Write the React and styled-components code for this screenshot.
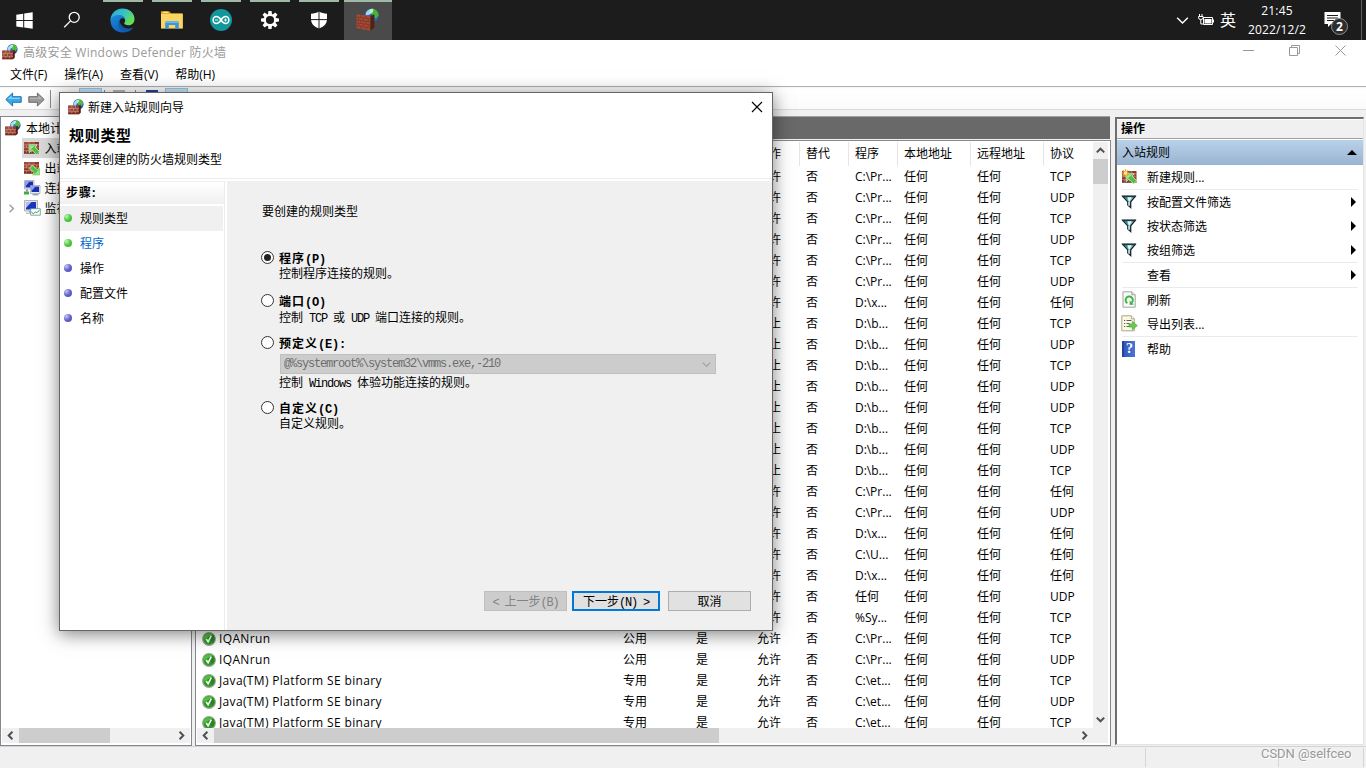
import React from 'react';
import styled, { createGlobalStyle, css } from 'styled-components';

const rows = [
  ['', '', '', '允许', '否', 'C:\\Pr...', 'TCP'],
  ['', '', '', '允许', '否', 'C:\\Pr...', 'UDP'],
  ['', '', '', '允许', '否', 'C:\\Pr...', 'TCP'],
  ['', '', '', '允许', '否', 'C:\\Pr...', 'UDP'],
  ['', '', '', '允许', '否', 'C:\\Pr...', 'TCP'],
  ['', '', '', '允许', '否', 'C:\\Pr...', 'UDP'],
  ['', '', '', '允许', '否', 'D:\\x...', '任何'],
  ['', '', '', '阻止', '否', 'D:\\b...', 'TCP'],
  ['', '', '', '阻止', '否', 'D:\\b...', 'UDP'],
  ['', '', '', '阻止', '否', 'D:\\b...', 'TCP'],
  ['', '', '', '阻止', '否', 'D:\\b...', 'UDP'],
  ['', '', '', '阻止', '否', 'D:\\b...', 'UDP'],
  ['', '', '', '阻止', '否', 'D:\\b...', 'TCP'],
  ['', '', '', '阻止', '否', 'D:\\b...', 'UDP'],
  ['', '', '', '阻止', '否', 'D:\\b...', 'TCP'],
  ['', '', '', '允许', '否', 'C:\\Pr...', '任何'],
  ['', '', '', '允许', '否', 'C:\\Pr...', 'UDP'],
  ['', '', '', '允许', '否', 'D:\\x...', '任何'],
  ['', '', '', '允许', '否', 'C:\\U...', '任何'],
  ['', '', '', '允许', '否', 'D:\\x...', '任何'],
  ['', '', '', '允许', '否', '任何', 'UDP'],
  ['', '', '', '允许', '否', '%Sy...', 'TCP'],
  ['IQANrun', '公用', '是', '允许', '否', 'C:\\Pr...', 'TCP'],
  ['IQANrun', '公用', '是', '允许', '否', 'C:\\Pr...', 'UDP'],
  ['Java(TM) Platform SE binary', '专用', '是', '允许', '否', 'C:\\et...', 'TCP'],
  ['Java(TM) Platform SE binary', '专用', '是', '允许', '否', 'C:\\et...', 'UDP'],
  ['Java(TM) Platform SE binary', '专用', '是', '允许', '否', 'C:\\et...', 'TCP'],
];

const steps = [
  { label: '规则类型', done: true, current: true },
  { label: '程序', done: true, link: true },
  { label: '操作' },
  { label: '配置文件' },
  { label: '名称' },
];

/* ---------- icons ---------- */

const Bricks = ({ x = 0, y = 0, w, h, count = 4 }) => {
  const rowH = h / count;
  return (
    <g>
      <rect x={x} y={y} width={w} height={h} fill="#913a29" />
      <rect x={x} y={y} width={w * 0.6} height={h / 2} fill="#a04c39" />
      {Array.from({ length: count }, (_, r) => (
        <g key={r} stroke="#cfa093" strokeWidth=".6">
          {r > 0 && <line x1={x} x2={x + w} y1={y + r * rowH} y2={y + r * rowH} />}
          {[0, 1, 2].map((c) => {
            const bx = x + ((c + (r % 2 ? 0.5 : 1)) * w) / 3;
            return bx < x + w - 1 ? (
              <line key={c} x1={bx} x2={bx} y1={y + r * rowH} y2={y + (r + 1) * rowH} />
            ) : null;
          })}
        </g>
      ))}
      <rect x={x} y={y + h - 0.8} width={w} height=".8" fill="#5c2118" />
    </g>
  );
};

const FirewallIcon = ({ size = 16 }) => (
  <svg width={size} height={size} viewBox="0 0 16 16">
    <circle cx="10.4" cy="5.3" r="5.2" fill="#2569c8" />
    <path d="M6 3.400C7.400 1.200 9.800.2 11.600.5l-.6 2.700-2.400 1.600-.6 2.400-2.500.2z" fill="#a9dcf4" />
    <path d="M10.800.600c2.400.2 4 1.800 4.300 4l-1.500 2.600-2.600-.6-1.200-2.300z" fill="#55bd3d" />
    <path d="M9 1.600l2.200-.8-.4 2.300-2 .9z" fill="#c0f0a5" />
    <path d="M12 8.200l2.600-1.600-.8 2.200-1.800 1.200z" fill="#163f99" />
    <Bricks x={0.2} y={6.6} w={10.8} h={8.6} count={3} />
    <path d="M11 6.600l1.800-1v8.200L11 15.200z" fill="#5a2018" />
  </svg>
);

const TaskFirewallIcon = () => (
  <svg width="24" height="24" viewBox="0 0 24 24">
    <circle cx="15.8" cy="7.4" r="6.9" fill="#2667c4" />
    <path d="M10 4.5C12 1.5 15 .3 17.6 1l-.8 4-5 2.2-2.2.6z" fill="#9ed8f2" />
    <path d="M16.500.8c3.600.6 6 3.200 6.200 6.400l-2.800 3.200-3.200-2-.8-3z" fill="#48b336" />
    <path d="M14 1.600l3.400-.6-.5 3.200-3 1.200z" fill="#c6f2b0" />
    <path d="M.6 6.2l13.8 1.600V22.800L.6 20.200z" fill="#a34b37" />
    <path d="M14.400 7.800l4-1.200v13l-4 3.200z" fill="#54200f" />
    <path
      d="M.6 9l13.800 1.800M.6 12l13.800 1.900M.6 14.800l13.800 2.100M.6 17.600l13.800 2.300M5 6.800v2.800m5-2.200v2.800M2.600 9.500v2.800M7.400 10v2.800m4.800-2v2.800M5 12.600v2.800m5-2.200V16m-7.400-.8V18m4.800-2.200v2.800m4.800-2v2.800M5 18.400V21m5-1.800v2.700"
      fill="none"
      stroke="#7c3323"
      strokeWidth=".7"
    />
  </svg>
);

const RuleIcon = ({ out, star }) => (
  <svg width="16" height="16" viewBox="0 0 16 16">
    <Bricks x={star ? 1 : 0} y={2} w={star ? 14.5 : 15} h={11.5} count={4} />
    <g transform={out ? 'rotate(180 10.6 10)' : undefined}>
      <path
        d="M5.200 4.800h8l-2.300 2.300 4.800 4.600-3 3.200-4.800-4.700-2.700 2.500z"
        fill="#4fc13f"
        stroke="#d9f2d2"
        strokeWidth=".8"
      />
      <path d="M6 5.600h5L6 10.600z" fill="#9be58d" />
    </g>
    {star && (
      <g>
        <path
          d="M4.500 0v8M.5 4h8M1.700 1.200l5.600 5.600M7.300 1.200L1.700 6.800"
          stroke="#f6a821"
          strokeWidth="1.100"
        />
        <circle cx="4.500" cy="4" r="1.700" fill="#fff3a8" />
      </g>
    )}
  </svg>
);

const ConnectionIcon = () => (
  <svg width="17" height="16" viewBox="0 0 17 16">
    <path d="M.5.500h9.500v8.500H.5z" fill="#e4e7ef" stroke="#8c92a6" strokeWidth=".6" />
    <path d="M1.500 1.500h7.500v6H1.500z" fill="#1b2fb5" />
    <path d="M1.500 1.500h4L1.500 6.500z" fill="#8fa8f0" />
    <path d="M0 11.500h5v3H0z" fill="#3fae3a" />
    <path d="M2 9.500h2v2H2z" fill="#8a93a8" />
    <path d="M6.500 5.500h9.500v8H6.500z" fill="#e9ecf4" stroke="#8c92a6" strokeWidth=".6" />
    <path d="M7.500 6.500h7.500v5.500H7.500z" fill="#1b2fb5" />
    <path d="M7.500 6.500h4l-4 4.500z" fill="#8fa8f0" />
    <path d="M8.500 14h6v1.400h-6z" fill="#9aa1b4" />
  </svg>
);

const MonitorIcon = () => (
  <svg width="17" height="16" viewBox="0 0 17 16">
    <path d="M.5.5h13v10.500H.5z" fill="#e2e4ea" stroke="#999" strokeWidth=".7" />
    <path d="M2 2h10v7.500H2z" fill="#1c35bd" />
    <path d="M2 2h5.500L2 8z" fill="#a8bdf0" />
    <path d="M5 11h4v1.500H5z" fill="#9ba0aa" />
    <path d="M2 12.500h7v1.400H2z" fill="#b9bdc7" />
    <path d="M6.700 8.700h9.600v6.500H6.700z" fill="#fff" stroke="#5d91a8" strokeWidth=".8" />
    <path d="M7.400 12l2 1.800 2-2 1.400 1 2.600-2.600" stroke="#2e9c33" fill="none" strokeWidth="1" />
  </svg>
);

const FunnelIcon = () => (
  <svg width="16" height="14" viewBox="0 0 16 14">
    <path d="M1.800 1.500h12.400L9.700 6.800v5.700L6.800 10V6.800z" fill="#8fcdd6" stroke="#15282d" strokeWidth="1.300" />
    <path d="M3.800 2.200h2.700v4z" fill="#2d8794" />
    <path d="M6.500 2.200h4L8.300 6.800z" fill="#f0f6f7" />
    <path d="M1 1.300h14" stroke="#24363a" strokeWidth="1.500" />
    <path d="M7.900 6.800v4" stroke="#e6eef0" />
  </svg>
);

const RefreshIcon = () => (
  <svg width="16" height="17" viewBox="0 0 16 17">
    <path d="M2 .8h8.800l3.400 3v12.400H2z" fill="#fafafa" stroke="#a3a3a3" />
    <path d="M10.800.8v3h3.400" fill="#e5e5e5" stroke="#a3a3a3" />
    <path d="M6.400 12.200A3.600 3.600 0 1 1 10.800 11.600" fill="none" stroke="#3db544" strokeWidth="2" />
    <path d="M8.600 9.600v4.400l4.400-.6z" fill="#3db544" />
  </svg>
);

const ExportIcon = () => (
  <svg width="17" height="17" viewBox="0 0 17 17">
    <path d="M.8.8h9.500l3 3v12H.8z" fill="#fbf8e4" stroke="#aaa58b" />
    <path d="M10.300.8v3h3" fill="#fff" stroke="#aaa58b" />
    <path d="M3 5.500h1.200M3 8.500h1.200M3 11.500h1.200M5.500 5.500h5M5.500 8.500h3M5.500 11.500h3" stroke="#5b5b66" />
    <path d="M8 9h3.400V6.400l4.900 4.200-4.900 4.200V12H8z" fill="#67ce49" stroke="#3a9d2b" strokeWidth=".6" />
  </svg>
);

const HelpIcon = () => (
  <HelpBook>
    <span>?</span>
  </HelpBook>
);

const CheckIcon = () => (
  <svg width="14" height="14" viewBox="0 0 14 14">
    <circle cx="7" cy="7" r="6.300" fill="#2c9a22" stroke="#9aa59a" strokeWidth="1.200" />
    <path d="M7 1.200A5.800 5.800 0 0 1 11 11L3 3a5.800 5.800 0 0 1 4-1.800z" fill="#27871c" />
    <path d="M1.600 6A5.600 5.600 0 0 1 10.500 2.400C8 4 4 6 1.600 8z" fill="#4cc23d" />
    <path d="M4.200 7l1.900 2.800L9.300 3.600" fill="none" stroke="#fff" strokeWidth="1.600" />
  </svg>
);

const ArrowIcon = ({ forward }) => (
  <svg width="17" height="15" viewBox="0 0 17 15">
    <g transform={forward ? 'translate(17 0) scale(-1 1)' : undefined}>
      <path
        d="M.8 7.500L7.600 1v3.700h8.600v5.600H7.600V14z"
        fill={forward ? '#9a9a9a' : '#3ba9e8'}
        stroke={forward ? '#6c6c6c' : '#1e73b5'}
        strokeWidth="1"
      />
      <path d="M2.800 7L6.600 3.400v2.400h8.400V7z" fill={forward ? '#b5b5b5' : '#83d2fa'} />
    </g>
  </svg>
);

const Chevron = ({ dir, color = '#505050', size = 9, weight = 2 }) => {
  const turn = { up: 0, right: 90, down: 180, left: 270 }[dir];
  return (
    <svg width={size} height={size} viewBox="0 0 9 9">
      <path
        d="M.8 6.400l3.700-3.700 3.700 3.700"
        fill="none"
        stroke={color}
        strokeWidth={weight}
        transform={`rotate(${turn} 4.5 4.5)`}
      />
    </svg>
  );
};

const WindowsIcon = () => (
  <svg width="17" height="17" viewBox="0 0 17 17" fill="#fff">
    <path d="M.3 2.700l6.900-1v6.400H.3zM8.200 1.500L16.700.3v7.800H8.200zM.3 9h6.900v6.400l-6.900-1zM8.200 9h8.500v7.800l-8.500-1.200z" />
  </svg>
);

const SearchIcon = () => (
  <svg width="18" height="18" viewBox="0 0 18 18" fill="none" stroke="#fff" strokeWidth="1.300">
    <circle cx="11.200" cy="6.300" r="5" />
    <path d="M7.600 9.900L1.200 16.300" />
  </svg>
);

const EdgeIcon = () => (
  <svg width="25" height="25" viewBox="0 0 25 25">
    <defs>
      <linearGradient id="edgeTop" x1="0" x2="1" y1="0" y2=".6">
        <stop offset="0" stopColor="#2aa5df" />
        <stop offset=".5" stopColor="#35c1c9" />
        <stop offset="1" stopColor="#66e04e" />
      </linearGradient>
      <linearGradient id="edgeLow" x1="0" x2=".7" y1="0" y2="1">
        <stop offset="0" stopColor="#1c8edb" />
        <stop offset="1" stopColor="#0c59b6" />
      </linearGradient>
    </defs>
    <path
      d="M.5 12.400C.5 5.700 5.600.5 12.400.5c7 0 12.100 4.600 12.100 10.400 0 4-2.800 6.300-6.200 6.300-2.600 0-4.100-.9-4.100-1.900 0-.7 1-1.200 1-3 0-2.500-2.200-4.400-5-4.400C5.600 7.900 2 10.200.5 12.400z"
      fill="url(#edgeTop)"
    />
    <path
      d="M.5 12.400C1 8.600 5 6.900 9 6.900c3.600 0 6.200 2 6.200 5-1-2-2.500-2.500-4-1.500-3.500 2.300-2.400 9.300 2.900 11.200 3 1 6.200.4 8.900-1.400-2.200 2.800-6 4.400-10.400 4.300C5.500 24.300.5 19 .5 12.400z"
      fill="url(#edgeLow)"
    />
    <path
      d="M9.200 12.500c-2.400 5.100 1 11 7.600 10.900 3-.6 5.300-2.200 6.500-4.200-5.600 3-12.300.7-14.100-6.700z"
      fill="#1258a4"
    />
  </svg>
);

const FolderIcon = () => (
  <svg width="24" height="20" viewBox="0 0 24 20">
    <path d="M1 1.200h8l2 2H22.500v15H1z" fill="#e9a722" />
    <path d="M1 4h21.800v14.500H1z" fill="#fcd462" />
    <path d="M3 1.800h5v1.200H3z" fill="#fbe6a3" />
    <path d="M5.200 19v-6q0-1.800 1.800-1.800h10q1.800 0 1.800 1.800v6h-3.600v-4H8.800v4z" fill="#3a96dd" />
    <path d="M5.200 13v-.4q0-1.400 1.800-1.400h10q1.800 0 1.800 1.400v.4z" fill="#69b8ee" />
  </svg>
);

const ArduinoIcon = () => (
  <svg width="24" height="24" viewBox="0 0 24 24">
    <circle cx="12" cy="12" r="11" fill="#12979c" />
    <path
      d="M12 12C10.500 9.700 9.300 8.600 7.500 8.600a3.400 3.400 0 0 0 0 6.800c1.800 0 3-1.100 4.500-3.400s2.700-3.400 4.500-3.400a3.400 3.400 0 0 1 0 6.800c-1.800 0-3-1.100-4.500-3.400z"
      fill="none"
      stroke="#fff"
      strokeWidth="1.500"
    />
    <path d="M6 12h3M15 12h3M16.500 10.500v3" stroke="#fff" strokeWidth=".9" />
  </svg>
);

const GearIcon = () => (
  <svg width="20" height="20" viewBox="0 0 20 20">
    {[0, 45, 90, 135, 180, 225, 270, 315].map((a) => (
      <path key={a} d="M8.400 1h3.200l.4 3.500H8z" fill="#fff" transform={`rotate(${a} 10 10)`} />
    ))}
    <circle cx="10" cy="10" r="5.200" fill="none" stroke="#fff" strokeWidth="2.200" />
  </svg>
);

const ShieldIcon = () => (
  <svg width="18" height="18" viewBox="0 0 18 18">
    <path
      d="M9 .5c2.300 1.500 5 2.100 8 2.200v5.600c0 4.400-3.200 7.500-8 9.300C4.200 15.800 1 12.700 1 8.300V2.700C4 2.600 6.700 2 9 .5z"
      fill="#fff"
    />
    <path d="M9 0v18M0 8.600h18" stroke="#1c1c1c" strokeWidth="1" />
  </svg>
);

const BatteryIcon = () => (
  <svg width="17" height="14" viewBox="0 0 17 14" fill="none" stroke="#fff">
    <path d="M5.500 4.500H14.500v7h-9z" />
    <path d="M6.500 6h7v4.500h-7z" fill="#fff" stroke="none" />
    <path d="M15.500 6.500v3" />
    <path d="M1.500 1v2M4 1v2M.5 3.500h4.600v1.300q0 1.700-2.300 1.700T.5 4.800zM2.800 6.500v4.500h2.500" />
  </svg>
);

/* ---------- styles ---------- */

const GlobalStyle = createGlobalStyle`
  * {
    box-sizing: border-box;
  }

  body {
    margin: 0;
    overflow: hidden;
    background: #f0f0f0;
    font-family: 'Open Sans', 'Noto Sans CJK SC', sans-serif;
    font-size: 12px;
    color: #000;
  }

  svg {
    display: block;
    flex: none;
  }
`;

const Screen = styled.div`
  position: relative;
  display: flex;
  flex-direction: column;
  width: 1366px;
  height: 768px;
  overflow: hidden;
`;

const Taskbar = styled.div`
  display: flex;
  flex: none;
  height: 40px;
  background: #1c1c1c;
  color: #fff;
`;

const TaskButton = styled.div`
  display: flex;
  align-items: center;
  justify-content: center;
  width: ${({ $active, $start }) => ($active || $start ? 48 : 49)}px;
  margin-left: ${({ $active }) => ($active ? 1 : 0)}px;
  background: ${({ $active }) => ($active ? '#4a4a4a' : 'transparent')};
  ${({ $open, $active }) =>
    $open &&
    css`
      background-image: linear-gradient(#9fb9a5, #9fb9a5);
      background-size: ${$active ? 48 : 40}px 2px;
      background-position: center top;
      background-repeat: no-repeat;
    `}
`;

const Gap = styled.div`
  width: 1px;
`;

const Tray = styled.div`
  display: flex;
  align-items: center;
  margin-left: auto;
`;

const TrayBattery = styled.div`
  margin-left: 9px;
`;

const InputMode = styled.span`
  width: 17px;
  margin-left: 5px;
  font-size: 16px;
  line-height: 38px;
`;

const Clock = styled.div`
  width: 62px;
  margin-left: 9px;
  text-align: center;
  line-height: 19px;
  letter-spacing: .15px;
`;

const Notify = styled.div`
  position: relative;
  width: 17px;
  height: 18px;
  margin: 0 20px 0 16px;
`;

const Badge = styled.span`
  position: absolute;
  left: 7px;
  top: 7px;
  width: 17px;
  height: 17px;
  border: 1px solid #8d8d8d;
  border-radius: 50%;
  background: #2e2e2e;
  font-size: 12px;
  font-weight: 700;
  line-height: 15px;
  text-align: center;
`;

const DesktopEdge = styled.div`
  width: 5px;
  height: 40px;
  border-left: 1px solid #5e5e5e;
`;

const TitleBar = styled.div`
  display: flex;
  align-items: center;
  flex: none;
  height: 23px;
  padding: 0 20px 0 2px;
  background: #fff;
  color: #999;
`;

const TitleText = styled.span`
  margin-left: 5px;
  letter-spacing: .25px;
`;

const WindowControls = styled.div`
  display: flex;
  gap: 35px;
  margin: -2px 0 0 auto;
`;

const MenuBar = styled.div`
  display: flex;
  gap: 17px;
  flex: none;
  height: 23px;
  padding-left: 10px;
  background: #fff;
  line-height: 23px;
`;

const Toolbar = styled.div`
  display: flex;
  flex: none;
  height: 24px;
  padding: 2px 0 0 5px;
  border-top: 1px solid #b0b0b0;
  border-bottom: 1px solid #dadada;
  background: linear-gradient(#f4f4f4, #fff 2px, #fbfbfb);
`;

const ToolArrow = styled.div`
  margin: 3px 6px 0 0;
`;

const ToolDivider = styled.div`
  width: 1px;
  height: 18px;
  margin: 1px 0 0 ${({ $gap }) => $gap}px;
  background: #8c8c8c;
`;

const ToolToggle = styled.div`
  width: 23px;
  height: 20px;
  margin: -1px 0 0 ${({ $gap }) => $gap}px;
  border: 1px solid #8ec8ee;
  background: #c9e4f7;
`;

const ToolGlyph = styled.div`
  width: 12px;
  height: 14px;
  margin: ${({ $top }) => $top}px 0 0 ${({ $gap }) => $gap}px;
  background: ${({ $color }) => $color};
`;

const Workspace = styled.div`
  display: flex;
  flex: 1;
  min-height: 0;
  padding: 6px 1px 0 0;
  background: #f0f0f0;
`;

const TreePane = styled.div`
  display: flex;
  flex-direction: column;
  width: 192px;
  border: 1px solid #828790;
  background: #fff;
`;

const Tree = styled.div`
  flex: 1;
  padding: 1px 0 0 1px;
`;

const TreeRow = styled.div`
  display: flex;
  align-items: center;
  height: 20px;
  padding-left: ${({ $root }) => ($root ? 3 : 5)}px;
  white-space: nowrap;
`;

const Twisty = styled.div`
  width: 15px;
`;

const TreeLabel = styled.div`
  display: flex;
  align-items: center;
  flex: 1;
  height: 20px;
  padding-left: ${({ $root }) => ($root ? 0 : 2)}px;
  background: ${({ $selected }) => ($selected ? '#d9d9d9' : 'transparent')};
`;

const TreeIcon = styled.div`
  width: ${({ $root }) => ($root ? 21 : 20.5)}px;
`;

const ListPane = styled.div`
  display: flex;
  flex-direction: column;
  width: 916px;
  margin-left: 3px;
`;

const ListBanner = styled.div`
  flex: none;
  height: 23px;
  margin-right: 1px;
  border-top: 1px solid #a0a0a0;
  background: #696969;
`;

const ListFrame = styled.div`
  display: flex;
  flex-direction: column;
  flex: 1;
  min-height: 0;
  margin-top: 1px;
  padding: 1px;
  border: 1px solid #828790;
  background: #fff;
`;

const ListView = styled.div`
  display: flex;
  flex: 1;
  min-height: 0;
`;

const Table = styled.div`
  flex: 1;
  min-height: 0;
  overflow: hidden;
`;

const TableRow = styled.div`
  display: grid;
  grid-template-columns: 419px 73px 61px 49px 49px 49px 73px 73px 50px;
  height: ${({ $head }) => ($head ? 24 : 21)}px;
  line-height: ${({ $head }) => ($head ? 24 : 21)}px;
  white-space: nowrap;
`;

const Cell = styled.div`
  display: flex;
  align-items: center;
  gap: 3px;
  padding-left: ${({ $name }) => ($name ? 5 : 7)}px;
  letter-spacing: ${({ $name }) => ($name ? '.35px' : '0')};
`;

const HeadCell = styled.div`
  padding-left: 6px;
  border-left: 1px solid #e5e5e5;
`;

const VScroll = styled.div`
  display: flex;
  flex-direction: column;
  align-items: center;
  width: 15px;
  margin-right: 1px;
  background: #f0f0f0;
`;

const HScroll = styled.div`
  display: flex;
  align-items: center;
  flex: none;
  height: 15px;
  margin: 0 1px ${({ $tree }) => ($tree ? 2 : 1)}px ${({ $tree }) => ($tree ? 1 : 0)}px;
  padding-right: ${({ $tree }) => ($tree ? 0 : 15)}px;
  background: #f0f0f0;
`;

const ScrollArrow = styled.div`
  display: flex;
  align-items: center;
  justify-content: center;
  width: 17px;
  height: 17px;
`;

const Thumb = styled.div`
  width: ${({ $w }) => $w}px;
  height: ${({ $h }) => $h}px;
  background: #cdcdcd;
`;

const Spacer = styled.div`
  flex: 1;
`;

const ActionPane = styled.div`
  flex: 1;
  margin: 1px 1px 1px 4px;
  border: 1px solid #e3e3e3;
  border-top: 2px solid #6e6e6e;
  border-left: 2px solid #6e6e6e;
  background: #fff;
`;

const ActionTitle = styled.div`
  height: 20px;
  padding-left: 4px;
  border-top: 1px solid #fff;
  border-bottom: 1px solid #a0a0a0;
  background: #f0f0f0;
  font-weight: 700;
  line-height: 18px;
`;

const ActionGroup = styled.div`
  display: flex;
  align-items: center;
  justify-content: space-between;
  height: 25px;
  margin-top: 1px;
  padding: 0 6px 1px 5px;
  background: linear-gradient(#b9d1ea, #99b4d1);
`;

const ActionItem = styled.div`
  display: flex;
  align-items: center;
  height: 24px;
  padding: 0 7px 1px 4px;
`;

const ActionIcon = styled.div`
  width: 26px;
`;

const ActionArrow = styled.div`
  margin-left: auto;
  border: 5px solid transparent;
  border-right: 0;
  border-left-color: #000;
`;

const ActionRule = styled.div`
  height: 1px;
  margin: 0 5px;
  background: #ebebeb;
`;

const Collapse = styled.div`
  border: 5px solid transparent;
  border-top: 0;
  border-bottom-color: #000;
`;

const HelpBook = styled.div`
  width: 13px;
  height: 16px;
  margin-left: 1px;
  border-left: 2px solid #22429b;
  background: linear-gradient(90deg, #3459bd, #4c74d6);
  color: #fff;
  font: 700 14px/16px 'Liberation Serif', serif;
  text-align: center;
`;

const StatusBar = styled.div`
  display: flex;
  flex: none;
  height: 22px;
  padding: 1px 2px 0 1145px;
  border-top: 1px solid #d3d3d3;
  background: #f0f0f0;
`;

const StatusCell = styled.div`
  width: ${({ $w }) => $w}px;
  height: 19px;
  border-left: 1px solid #d5d5d5;
`;

const Watermark = styled.div`
  position: absolute;
  left: 1261px;
  top: 745px;
  color: #999;
  font-family: Roboto, sans-serif;
  font-size: 13px;
  line-height: 18px;
  letter-spacing: -.05px;
  text-shadow: 1px 1px 0 #fff;
  white-space: nowrap;
`;

const Dialog = styled.div`
  position: absolute;
  left: 59px;
  top: 92px;
  display: flex;
  flex-direction: column;
  width: 714px;
  height: 539px;
  border: 1px solid #666;
  background: #fff;
  box-shadow: 0 3px 17px rgba(0, 0, 0, 0.5);
`;

const DialogHead = styled.div`
  height: 86px;
  border-bottom: 1px solid #ececec;
`;

const DialogTitle = styled.div`
  display: flex;
  align-items: center;
  height: 28px;
  padding: 0 9px 0 8px;
`;

const DialogCaption = styled.span`
  flex: 1;
  margin-left: 4px;
`;

const DialogHeading = styled.div`
  padding-left: 9px;
  font-size: 15px;
  font-weight: 700;
  line-height: 29px;
  letter-spacing: .7px;
`;

const DialogHint = styled.div`
  padding-left: 6px;
  line-height: 19px;
`;

const DialogMain = styled.div`
  display: flex;
  flex: 1;
  margin-top: 2px;
`;

const StepList = styled.div`
  width: 165px;
  margin-right: 2px;
  border-right: 1px solid #ebebeb;
`;

const StepHeader = styled.div`
  height: 23px;
  margin-bottom: 2px;
  padding-left: 6px;
  border-top: 1px solid #f0f0f0;
  background: linear-gradient(#fff, #f0f0f0);
  font-weight: 700;
  line-height: 21px;
  letter-spacing: 1px;
`;

const Step = styled.div`
  display: flex;
  align-items: center;
  height: 25px;
  margin-right: 1px;
  padding: 0 0 1px 4px;
  background: ${({ $current }) => ($current ? '#f0f0f0' : '#fff')};
  color: ${({ $link }) => ($link ? '#0066cc' : '#000')};
`;

const StepDot = styled.i`
  width: 8px;
  height: 8px;
  margin: -1px 8px 0 0;
  border-radius: 50%;
  background: ${({ $done }) =>
    $done
      ? 'radial-gradient(circle at 30% 28%, #c5f0c0, #4ecb40 50%, #35a72b)'
      : 'radial-gradient(circle at 30% 28%, #c9c9f0, #6262cc 50%, #4c4cb4)'};
`;

const DialogBody = styled.div`
  display: flex;
  flex-direction: column;
  flex: 1;
  padding: 20px 21px 19px 34px;
  background: #f0f0f0;
  font-family: 'Noto Sans CJK SC', sans-serif;
`;

const BodyPrompt = styled.div`
  height: 48px;
  padding-left: 1px;
  line-height: 20px;
`;

const Option = styled.div`
  display: flex;
  height: ${({ $h }) => $h}px;
`;

const Radio = styled.div`
  display: flex;
  align-items: center;
  justify-content: center;
  width: 13px;
  height: 13px;
  margin: 2px 5px 0 0;
  border: 1px solid #333;
  border-radius: 50%;
  background: #fff;

  &::after {
    content: '';
    width: 7px;
    height: 7px;
    border-radius: 50%;
    background: ${({ $checked }) => ($checked ? '#222' : 'transparent')};
  }
`;

const OptionText = styled.div`
  width: 437px;
`;

const OptionLabel = styled.div`
  height: ${({ $h }) => $h || 17}px;
  font-weight: 700;
  line-height: 17px;
  letter-spacing: 1px;
`;

const OptionHint = styled.div`
  height: 16px;
  line-height: ${({ $up }) => ($up ? 14 : 16)}px;
`;

const Select = styled.div`
  display: flex;
  align-items: center;
  justify-content: space-between;
  height: 20px;
  margin: 0 0 0 1px;
  padding: 0 4px 0 3px;
  border: 1px solid #bfbfbf;
  background: #ccc;
  color: #6d6d6d;
`;

const Half = styled.span`
  font-family: 'Liberation Mono', monospace;
  font-size: 12px;
  letter-spacing: ${({ $bold }) => ($bold ? '-.2px' : '-1.2px')};
  white-space: pre;
`;

const ButtonRow = styled.div`
  display: flex;
  justify-content: flex-end;
  margin-top: auto;
`;

const Button = styled.button`
  width: ${({ $primary }) => ($primary ? 88 : 83)}px;
  height: 20px;
  margin: 0 0 0 ${({ $gap }) => $gap || 0}px;
  padding: 0;
  border: ${({ $primary }) => ($primary ? '2px solid #0078d7' : '1px solid #adadad')};
  background: #e1e1e1;
  color: #000;
  font-family: 'Noto Sans CJK SC', sans-serif;
  font-size: 12px;
  line-height: ${({ $primary }) => ($primary ? 16 : 18)}px;

  &:disabled {
    border-color: #bfbfbf;
    background: #ccc;
    color: #838383;
  }
`;

/* ---------- parts ---------- */

const Mixed = ({ text, bold }) =>
  text.split(/([\x20-\x7e]+)/).map((part, i) =>
    i % 2 ? (
      <Half key={i} $bold={bold}>
        {part}
      </Half>
    ) : (
      part
    )
  );

const taskItems = [EdgeIcon, FolderIcon, ArduinoIcon, GearIcon, ShieldIcon];

const TopTaskbar = () => (
  <Taskbar>
    <TaskButton $start>
      <WindowsIcon />
    </TaskButton>
    <TaskButton $start>
      <SearchIcon />
    </TaskButton>
    <Gap />
    <Gap />
    {taskItems.map((Icon, i) => (
      <TaskButton key={i} $open>
        <Icon />
      </TaskButton>
    ))}
    <TaskButton $open $active>
      <TaskFirewallIcon />
    </TaskButton>
    <Tray>
      <Chevron dir="down" color="#fff" size={13} weight={1} />
      <TrayBattery>
        <BatteryIcon />
      </TrayBattery>
      <InputMode>英</InputMode>
      <Clock>
        21:45
        <br />
        2022/12/2
      </Clock>
      <Notify>
        <svg width="17" height="17" viewBox="0 0 17 17">
          <path d="M.5 1h16v12H7l-3 3v-3H.5z" fill="#fff" />
          <path d="M3 4.500h11M3 7h11M3 9.500h7" stroke="#1c1c1c" />
        </svg>
        <Badge>2</Badge>
      </Notify>
      <DesktopEdge />
    </Tray>
  </Taskbar>
);

const treeItems = [
  { label: '入站规则', icon: <RuleIcon />, selected: true },
  { label: '出站规则', icon: <RuleIcon out /> },
  { label: '连接安全规则', icon: <ConnectionIcon /> },
  { label: '监视', icon: <MonitorIcon />, expandable: true },
];

const actions = [
  { label: '新建规则...', icon: <RuleIcon star />, rule: true },
  { label: '按配置文件筛选', icon: <FunnelIcon />, more: true },
  { label: '按状态筛选', icon: <FunnelIcon />, more: true },
  { label: '按组筛选', icon: <FunnelIcon />, more: true, rule: true },
  { label: '查看', more: true, rule: true },
  { label: '刷新', icon: <RefreshIcon /> },
  { label: '导出列表...', icon: <ExportIcon />, rule: true },
  { label: '帮助', icon: <HelpIcon /> },
];

const RuleList = () => (
  <ListPane>
    <ListBanner />
    <ListFrame>
      <ListView>
        <Table>
          <TableRow $head>
            <HeadCell />
            <HeadCell />
            <HeadCell />
            <HeadCell>操作</HeadCell>
            <HeadCell>替代</HeadCell>
            <HeadCell>程序</HeadCell>
            <HeadCell>本地地址</HeadCell>
            <HeadCell>远程地址</HeadCell>
            <HeadCell>协议</HeadCell>
          </TableRow>
          {rows.map(([name, profile, enabled, action, override, program, protocol], i) => (
            <TableRow key={i}>
              <Cell $name>
                {name && <CheckIcon />}
                {name}
              </Cell>
              <Cell>{profile}</Cell>
              <Cell>{enabled}</Cell>
              <Cell>{action}</Cell>
              <Cell>{override}</Cell>
              <Cell>{program}</Cell>
              <Cell>任何</Cell>
              <Cell>任何</Cell>
              <Cell>{protocol}</Cell>
            </TableRow>
          ))}
        </Table>
        <VScroll>
          <ScrollArrow>
            <Chevron dir="up" />
          </ScrollArrow>
          <Thumb $w={15} $h={25} />
          <Spacer />
          <ScrollArrow>
            <Chevron dir="down" />
          </ScrollArrow>
        </VScroll>
      </ListView>
      <HScroll>
        <ScrollArrow>
          <Chevron dir="left" />
        </ScrollArrow>
        <Thumb $w={505} $h={15} />
        <Spacer />
        <ScrollArrow>
          <Chevron dir="right" />
        </ScrollArrow>
      </HScroll>
    </ListFrame>
  </ListPane>
);

const Wizard = () => (
  <Dialog>
    <DialogHead>
      <DialogTitle>
        <FirewallIcon />
        <DialogCaption>新建入站规则向导</DialogCaption>
        <svg width="12" height="12" viewBox="0 0 12 12">
          <path d="M1 1l10 10M11 1L1 11" stroke="#000" strokeWidth="1.100" />
        </svg>
      </DialogTitle>
      <DialogHeading>规则类型</DialogHeading>
      <DialogHint>选择要创建的防火墙规则类型</DialogHint>
    </DialogHead>
    <DialogMain>
      <StepList>
        <StepHeader>步骤:</StepHeader>
        {steps.map(({ label, done, current, link }) => (
          <Step key={label} $current={current} $link={link}>
            <StepDot $done={done} />
            {label}
          </Step>
        ))}
      </StepList>
      <DialogBody>
        <BodyPrompt>要创建的规则类型</BodyPrompt>
        <Option $h={43}>
          <Radio $checked />
          <OptionText>
            <OptionLabel>
              <Mixed text="程序(P)" bold />
            </OptionLabel>
            <OptionHint $up>控制程序连接的规则。</OptionHint>
          </OptionText>
        </Option>
        <Option $h={42}>
          <Radio />
          <OptionText>
            <OptionLabel>
              <Mixed text="端口(O)" bold />
            </OptionLabel>
            <OptionHint>
              <Mixed text="控制 TCP 或 UDP 端口连接的规则。" />
            </OptionHint>
          </OptionText>
        </Option>
        <Option $h={65}>
          <Radio />
          <OptionText>
            <OptionLabel $h={20}>
              <Mixed text="预定义(E):" bold />
            </OptionLabel>
            <Select>
              <Mixed text="@%systemroot%\system32\vmms.exe,-210" />
              <Chevron dir="down" color="#a0a0a0" weight={1.2} />
            </Select>
            <OptionHint>
              <Mixed text="控制 Windows 体验功能连接的规则。" />
            </OptionHint>
          </OptionText>
        </Option>
        <Option $h={40}>
          <Radio />
          <OptionText>
            <OptionLabel>
              <Mixed text="自定义(C)" bold />
            </OptionLabel>
            <OptionHint $up>自定义规则。</OptionHint>
          </OptionText>
        </Option>
        <ButtonRow>
          <Button disabled>
            <Mixed text="< 上一步(B)" />
          </Button>
          <Button $primary $gap={5}>
            <Mixed text="下一步(N) >" />
          </Button>
          <Button $gap={8}>取消</Button>
        </ButtonRow>
      </DialogBody>
    </DialogMain>
  </Dialog>
);

const App = () => (
  <Screen>
    <GlobalStyle />
    <TopTaskbar />
    <TitleBar>
      <FirewallIcon />
      <TitleText>高级安全 Windows Defender 防火墙</TitleText>
      <WindowControls>
        <svg width="11" height="11" viewBox="0 0 11 11">
          <path d="M0 5.500h11" stroke="#999" />
        </svg>
        <svg width="11" height="11" viewBox="0 0 11 11" fill="none" stroke="#999">
          <path d="M.5 2.500h8v8h-8zM2.500 2.500v-2h8v8h-2" />
        </svg>
        <svg width="11" height="11" viewBox="0 0 11 11" stroke="#999">
          <path d="M.5.5l10 10M10.500.5l-10 10" />
        </svg>
      </WindowControls>
    </TitleBar>
    <MenuBar>
      <span>文件(F)</span>
      <span>操作(A)</span>
      <span>查看(V)</span>
      <span>帮助(H)</span>
    </MenuBar>
    <Toolbar>
      <ToolArrow>
        <ArrowIcon />
      </ToolArrow>
      <ToolArrow>
        <ArrowIcon forward />
      </ToolArrow>
      <ToolDivider $gap={-1} />
      <ToolToggle $gap={28} />
      <ToolDivider $gap={2} />
      <ToolGlyph $gap={8} $top={1} $color="#b8b8b8" />
      <ToolDivider $gap={10} />
      <ToolGlyph $gap={10} $top={1} $color="#2a3f9e" />
      <ToolToggle $gap={7} />
    </Toolbar>
    <Workspace>
      <TreePane>
        <Tree>
          <TreeRow $root>
            <TreeLabel $root>
              <TreeIcon $root>
                <FirewallIcon />
              </TreeIcon>
              本地计算机
            </TreeLabel>
          </TreeRow>
          {treeItems.map(({ label, icon, selected, expandable }) => (
            <TreeRow key={label}>
              <Twisty>{expandable && <Chevron dir="right" color="#a0a0a0" weight={1.5} />}</Twisty>
              <TreeLabel $selected={selected}>
                <TreeIcon>{icon}</TreeIcon>
                {label}
              </TreeLabel>
            </TreeRow>
          ))}
        </Tree>
        <HScroll $tree>
          <ScrollArrow>
            <Chevron dir="left" />
          </ScrollArrow>
          <Thumb $w={91} $h={15} />
          <Spacer />
          <ScrollArrow>
            <Chevron dir="right" />
          </ScrollArrow>
        </HScroll>
      </TreePane>
      <RuleList />
      <ActionPane>
        <ActionTitle>操作</ActionTitle>
        <ActionGroup>
          入站规则
          <Collapse />
        </ActionGroup>
        {actions.map(({ label, icon, more, rule }) => (
          <React.Fragment key={label}>
            <ActionItem>
              <ActionIcon>{icon}</ActionIcon>
              {label}
              {more && <ActionArrow />}
            </ActionItem>
            {rule && <ActionRule />}
          </React.Fragment>
        ))}
      </ActionPane>
    </Workspace>
    <StatusBar>
      <StatusCell $w={133} />
      <StatusCell $w={85} />
      <StatusCell $w={1} />
    </StatusBar>
    <Wizard />
    <Watermark>CSDN @selfceo</Watermark>
  </Screen>
);

export default App;
